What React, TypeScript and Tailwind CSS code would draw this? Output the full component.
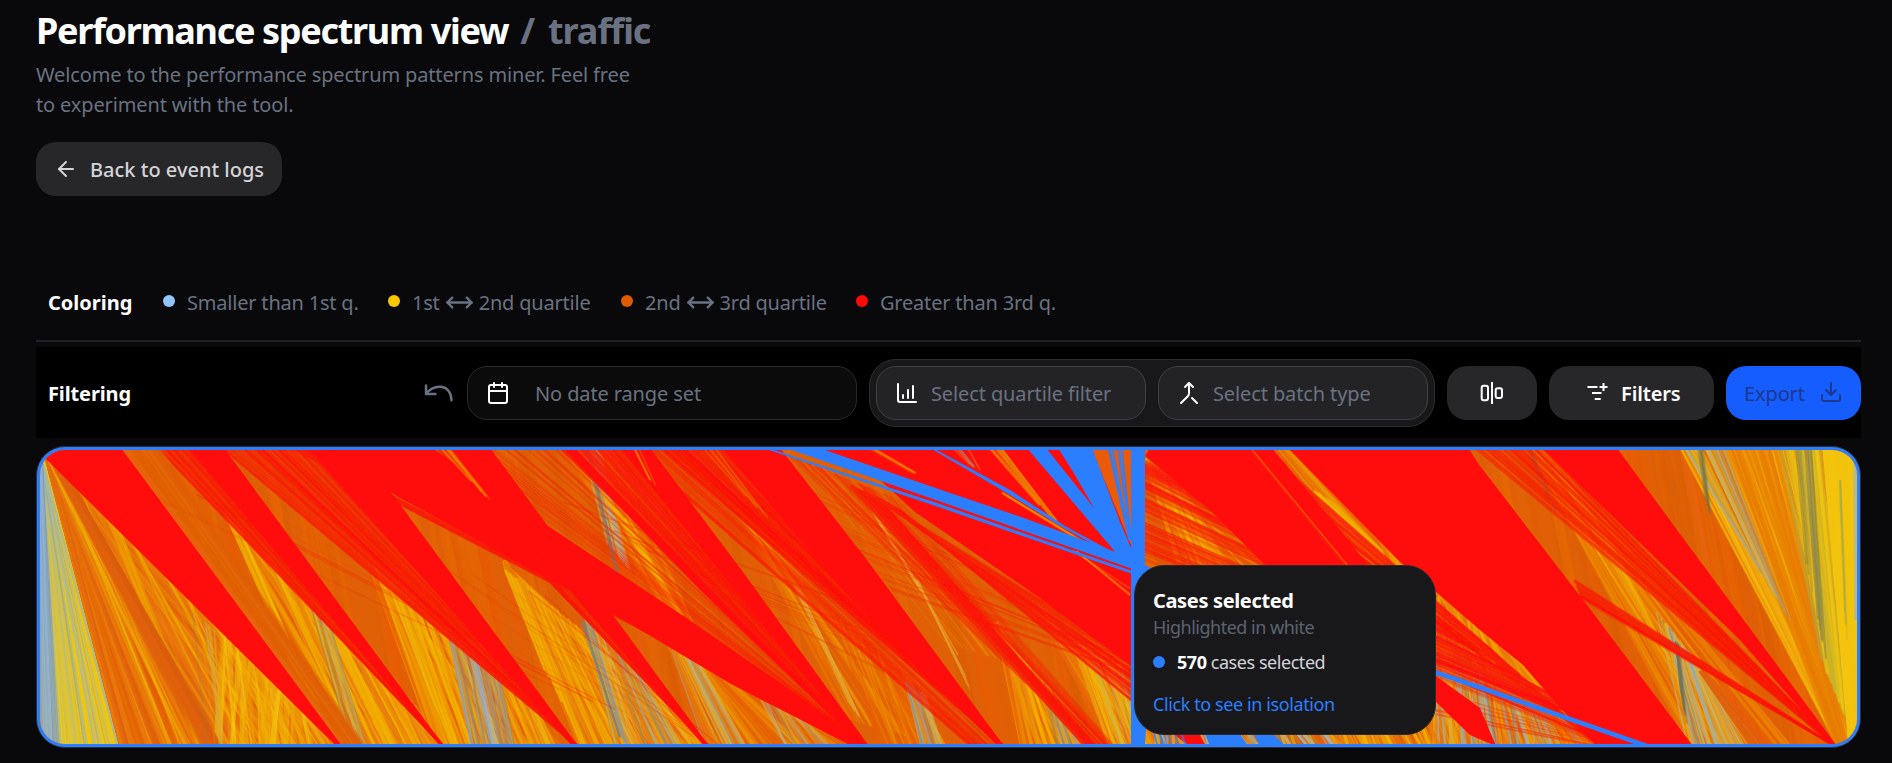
import React from "react";
import { ArrowLeft, Calendar, ChartColumnIncreasing, Download, Merge, MoveHorizontal } from "lucide-react";

type Pt = [number, number];
type Band = { a: Pt; b: Pt; c: Pt; d: Pt; n: number; colors: string[]; w: number; o: number; j?: number };

function rng(seed: number) {
  let s = seed;
  return () => {
    s = (s + 0x6d2b79f5) | 0;
    let t = Math.imul(s ^ (s >>> 15), 1 | s);
    t = (t + Math.imul(t ^ (t >>> 7), 61 | t)) ^ t;
    return ((t ^ (t >>> 14)) >>> 0) / 4294967296;
  };
}

const YELLOW = ["#f0b808", "#f0a808", "#f5b800", "#e87c0a", "#e8860a"];
const HOT = ["#ee9404", "#f0a400", "#e87808", "#e86008", "#e5600a"];
const PALE = ["#a9b8b0", "#c8b060", "#8fb0c8", "#8a8460", "#eeb010", "#e0a030", "#e07c18"];
const ORANGE = ["#e06008", "#d85c08", "#e86a08", "#ea5a08"];
const RED = ["#ff0c0c", "#fa1c0a", "#f03008"];
const BLUE = ["#2b7fff"];

function Streaks({ seed, ...p }: Band & { seed: number }) {
  const r = rng(seed * 7919 + 13);
  return (
    <g>
      {Array.from({ length: p.n }, (_, i) => {
        const t = r();
        const u = Math.min(1, Math.max(0, t + (r() - 0.5) * (p.j ?? 0.12)));
        const color = p.colors[Math.floor(r() * p.colors.length)];
        const w = p.w * (0.4 + r());
        const o = p.o * (0.5 + r() * 0.5);
        return (
          <line
            key={i}
            x1={p.a[0] + (p.b[0] - p.a[0]) * t}
            y1={p.a[1] + (p.b[1] - p.a[1]) * t}
            x2={p.c[0] + (p.d[0] - p.c[0]) * u}
            y2={p.c[1] + (p.d[1] - p.c[1]) * u}
            stroke={color}
            strokeWidth={w}
            strokeOpacity={o}
          />
        );
      })}
    </g>
  );
}

const T = 448;
const B = 746;
const band = (a: Pt, b: Pt, c: Pt, d: Pt, n: number, colors: string[], w: number, o: number, j?: number): Band => ({ a, b, c, d, n, colors, w, o, j });

const ground: Band[] = [
  band([30, T], [1870, T], [90, B], [1930, B], 420, ORANGE, 7, 0.5, 0.01),
  // opening fan
  band([38, 450], [47, 457], [34, B], [122, B], 150, ["#f0c80c", "#e8c81c", "#d8c440", "#f4c30a"], 3.4, 0.9, 0.3),
  band([38, 450], [45, 470], [36, B], [118, B], 46, ["#9cb8c0", "#a0b8a8", "#c0c078", "#8898a0"], 1.6, 0.6, 0.5),
  band([38, 450], [43, 470], [36, B], [62, B], 40, ["#8fb4dc", "#94b4d0", "#7890b0"], 2.2, 0.6, 0.5),
  band([47, 457], [48, 458], [122, B], [338, B], 190, ["#e87808", "#e06008", "#ea8c08", "#e86c08"], 4, 0.9, 1),
  band([48, 458], [300, 710], [170, B], [334, B], 70, YELLOW, 2.6, 0.55, 0.3),
  band([220, 630], [310, 720], [215, B], [325, B], 60, ["#f4c30a", "#f0b808", "#ee9a08"], 3.4, 0.6, 0.3),
  band([47, 457], [70, 480], [200, B], [222, B], 20, ORANGE, 4, 0.8, 0.3),
  band([190, 610], [215, 630], [205, B], [226, B], 9, PALE, 2.6, 0.45, 0.4),
  // successive open wedges
  band([226, 512], [232, 522], [332, B], [440, B], 90, HOT, 3.6, 0.8, 1),
  band([228, 520], [240, 528], [290, 660], [315, 700], 20, YELLOW, 2.4, 0.7, 0.5),
  band([260, 545], [420, 710], [352, B], [442, B], 80, YELLOW, 3, 0.7, 0.2),
  band([306, 590], [330, 620], [350, B], [366, B], 16, PALE, 2.5, 0.6, 0.3),
  band([368, 560], [376, 570], [436, B], [560, B], 100, HOT, 3.6, 0.8, 1),
  band([374, 565], [530, 694], [438, B], [555, B], 90, YELLOW, 3, 0.7, 0.15),
  band([445, 620], [500, 672], [472, B], [515, B], 44, ["#908070", "#8a94a0", "#c8a050", "#b07840", "#a0b4c8"], 2.6, 0.6, 0.2),
  band([504, 560], [506, 570], [580, B], [705, B], 110, HOT, 3.4, 0.8, 1),
  band([505, 570], [520, 580], [545, 670], [585, B], 16, YELLOW, 2.2, 0.7, 0.4),
  band([512, 575], [660, 690], [582, B], [703, B], 70, YELLOW, 2.4, 0.6, 0.15),
  band([582, 610], [640, 670], [616, B], [692, B], 42, PALE, 2.8, 0.6, 0.25),
  band([580, 620], [592, 625], [618, 735], [628, B], 9, ["#707870", "#8090a0"], 2, 0.6, 0.3),
  band([562, T], [612, T], [660, 600], [700, 640], 60, HOT, 3, 0.5, 0.4),
  band([580, T], [600, T], [605, 540], [630, 570], 30, PALE, 2.4, 0.6, 0.3),
  band([585, T], [589, T], [612, 560], [620, 580], 6, ["#78806c"], 2, 0.6, 0.3),
  band([600, 490], [625, 520], [665, 590], [690, 630], 40, YELLOW, 2.8, 0.6, 0.3),
  band([668, 646], [740, 680], [710, B], [850, B], 80, HOT, 3.4, 0.65, 0.15),
  band([668, 648], [700, 665], [705, B], [745, B], 24, PALE, 2.4, 0.6, 0.3),
  band([760, 700], [800, 715], [780, B], [830, B], 26, PALE, 2.4, 0.5, 0.3),
  band([722, 480], [728, 490], [850, 720], [940, B], 44, HOT, 2.2, 0.5, 1),
  band([793, 585], [800, 590], [846, 700], [862, 720], 12, ["#e8a020", "#d8b050", "#ee9404"], 1.8, 0.6, 0.5),
  band([830, 610], [910, 680], [880, B], [945, B], 44, HOT, 2.4, 0.55, 0.3),
  band([905, 680], [925, 695], [920, B], [943, B], 24, PALE, 2.4, 0.7, 0.3),
  band([785, 455], [880, 500], [940, 640], [1000, 660], 26, HOT, 1.6, 0.35, 0.4),
  band([863, 495], [866, 500], [918, 586], [924, 594], 9, ["#e8a020", "#f0b010", "#d8b050"], 2, 0.7, 0.6),
  band([912, 575], [918, 580], [958, 655], [970, 690], 6, ["#e8a020", "#d8a050"], 1.5, 0.6, 0.5),
  band([996, 622], [1000, 632], [1022, B], [1088, B], 80, HOT, 3, 0.85, 1),
  band([1003, 640], [1050, 690], [1025, B], [1085, B], 30, YELLOW, 2.6, 0.7, 0.2),
  band([1044, 690], [1060, 705], [1058, B], [1080, B], 20, PALE, 2.4, 0.7, 0.3),
  band([1033, 600], [1040, 606], [1110, B], [1145, B], 50, HOT, 2.4, 0.7, 0.8),
  band([1070, 640], [1120, 665], [1105, B], [1160, B], 50, YELLOW, 2.8, 0.75, 0.2),
  band([1090, 650], [1125, 672], [1116, B], [1145, B], 14, PALE, 2, 0.6, 0.3),
  band([1145, 458], [1150, 468], [1190, 600], [1290, 580], 70, HOT, 3, 0.6, 1),
  band([1160, 480], [1185, 490], [1200, 565], [1235, 575], 26, YELLOW, 2.2, 0.6, 0.4),
  band([1278, T], [1292, T], [1370, 560], [1420, 580], 60, HOT, 2.6, 0.6, 0.4),
  band([1312, 490], [1330, 500], [1390, 560], [1412, 580], 20, YELLOW, 2.2, 0.55, 0.3),
  band([1380, 540], [1450, 590], [1440, B], [1590, B], 130, HOT, 3, 0.75, 0.4),
  band([1430, 590], [1520, 660], [1430, B], [1590, B], 60, YELLOW, 2.6, 0.6, 0.3),
  band([1430, 650], [1570, 712], [1430, B], [1594, B], 80, PALE, 2.6, 0.65, 0.12),
  band([1150, 720], [1330, 720], [1155, B], [1350, B], 110, PALE, 2.6, 0.8, 0.1),
  band([1330, 725], [1430, 725], [1340, B], [1440, B], 50, YELLOW, 3, 0.8, 0.1),
  band([1530, T], [1545, T], [1690, B], [1790, B], 110, HOT, 2.6, 0.6, 0.6),
  band([1528, T], [1532, T], [1540, 480], [1560, 520], 6, ["#807040"], 1.8, 0.5, 0.3),
  band([1555, 465], [1610, 540], [1640, 610], [1670, 660], 34, YELLOW, 2.4, 0.6, 0.4),
  band([1655, 610], [1710, 680], [1684, B], [1750, B], 60, PALE, 2.8, 0.65, 0.25),
  band([1674, 640], [1680, 645], [1680, 690], [1688, 730], 6, ["#686c58"], 2, 0.6, 0.3),
  band([1700, 670], [1712, 680], [1752, B], [1768, B], 26, ORANGE, 4, 0.9, 0.5),
  // closing fan on the right edge
  band([1680, T], [1880, T], [1838, B], [1880, B], 210, ["#f0a808", "#f4b80a", "#ee9a08", "#e88408"], 3.6, 0.9, 0.06),
  band([1720, T], [1780, T], [1836, B], [1848, B], 50, ["#e87808", "#e88408"], 2.4, 0.6, 0.2),
  band([1684, T], [1724, T], [1760, 570], [1790, 620], 34, PALE, 2, 0.5, 0.3),
  band([1698, T], [1704, T], [1706, 500], [1712, 520], 6, ["#6c7050"], 1.8, 0.5, 0.3),
  band([1780, T], [1840, T], [1822, 660], [1858, B], 60, ["#c8b830", "#b0a840", "#f4c30a", "#e8c010"], 3, 0.55, 0.1),
  band([1824, T], [1870, T], [1850, B], [1870, B], 90, ["#f4c30a", "#f0c40a"], 4, 0.9, 0.1),
  band([1796, T], [1812, T], [1806, 560], [1826, 660], 9, ["#687050", "#8a8460"], 2.2, 0.5, 0.2),
  band([1839, 480], [1842, 480], [1844, 600], [1850, 680], 4, ["#a0a850"], 1.6, 0.4, 0.2),
  band([1854, T], [1859, T], [1855, 620], [1859, 620], 6, ["#b0b8a0"], 1.6, 0.6, 0.2),
];

const haze: Band[] = [
  band([157, T], [192, T], [443, B], [443, B], 70, RED, 2, 0.5),
  band([122, T], [157, T], [341, B], [362, B], 16, ORANGE, 8, 0.7),
  band([222, T], [310, T], [577, B], [577, B], 120, RED, 2, 0.5),
  band([290, T], [360, T], [867, B], [867, B], 60, RED, 2, 0.5),
  band([420, T], [450, T], [708, B], [708, B], 40, RED, 2, 0.5),
  band([560, T], [625, T], [867, B], [867, B], 120, RED, 2.2, 0.5),
  band([440, T], [560, T], [867, B], [867, B], 36, RED, 1.8, 0.35),
  band([660, T], [735, T], [1003, B], [1003, B], 140, RED, 2.2, 0.5),
  band([630, T], [700, T], [970, B], [1003, B], 50, RED, 1.8, 0.35),
  band([788, 455], [900, 500], [1090, B], [1115, B], 50, RED, 1.8, 0.3),
  band([850, 485], [880, 500], [1085, B], [1095, B], 60, RED, 2.4, 0.5),
  band([862, 490], [900, 510], [1131, 655], [1131, 700], 60, RED, 2.4, 0.5),
  band([810, 490], [900, 600], [1135, 640], [1140, 680], 16, RED, 1.5, 0.4, 0.1),
  band([60, 455], [560, 600], [560, 690], [720, B], 14, RED, 1.2, 0.35, 0.2),
  band([560, 500], [700, 580], [840, 600], [900, 680], 10, RED, 1.2, 0.35, 0.2),
  band([1145, 460], [1145, 560], [1440, 620], [1600, 744], 70, RED, 2.6, 0.55, 0.1),
  band([1290, 470], [1350, 560], [1480, 640], [1600, B], 50, RED, 2, 0.45, 0.3),
  band([1436, 635], [1436, 665], [1630, 735], [1660, B], 26, RED, 2.4, 0.6, 0.1),
  band([1436, 690], [1436, 715], [1590, 738], [1590, B], 8, RED, 1.4, 0.5, 0.1),
  band([1475, T], [1545, T], [1835, B], [1835, B], 100, RED, 1.8, 0.38),
  band([1574, 580], [1582, 600], [1835, B], [1835, B], 34, RED, 1.8, 0.55),
];

const redAreas = [
  "45,458 44,448 121,448 342,746 336,746",
  "189,448 224,448 444,746 440,746",
  "308,448 360,448 393,495 578,746 572,746",
  "330,448 432,448 560,534 688,619 789,689 868,746 848,744 731,684 617,616 398,497",
  "447,448 490,448 544,521 709,746 704,746 585,608",
  "563,448 575,448 740,620 868,746 858,742 700,590",
  "620,448 650,448 740,568 869,746 855,738",
  "722,448 780,448 867,560 1004,746 996,744 856,605",
  "818,448 1120,448 1131,470 1131,666 1040,598 960,543 915,512 880,480",
  "1150,448 1272,448 1340,530 1372,570 1270,570 1210,510 1145,456",
  "1288,448 1468,448 1480,466 1587,605 1693,746 1596,746 1557,704 1523,665 1480,630 1436,592 1400,562",
  "1436,676 1480,708 1496,746 1470,735 1436,702",
  "1542,448 1617,448 1680,534 1837,746 1831,744 1740,640",
  "1170,732 1200,735 1206,746 1190,746",
];

const blueAreas = [
  "1131,448 1145,448 1145,565 1155,570 1145,746 1131,746",
  "786,448 819,448 940,489.500 1024,518 1113,551 1131,557 1131,568.500 940,501.500",
  "763,448 776,450.500 940,504 1131,570.500 1131,573.500 940,507.500",
  "930,448 933,448 1010,490 1065,526 1113,552 1113,555 1060,526 1000,489",
  "1027,448 1046,448 1094,508 1072,470 1058,448 1092,448 1120,522 1131,548 1131,566 1117,554",
  "1436,670 1480,685 1648,744 1640,746 1480,690 1436,675",
  "1205,734 1240,734 1248,746 1210,746",
  "1254,734 1272,734 1286,746 1260,746",
];

function Spectrum() {
  return (
    <svg className="block h-full w-full" viewBox="40 450 1817 294" preserveAspectRatio="none" aria-hidden="true">
      <defs>
        <filter id="soften" x="0" y="0" width="1" height="1">
          <feGaussianBlur stdDeviation="0.7" />
        </filter>
      </defs>
      <rect x="40" y="450" width="1817" height="294" fill="#e06008" />
      <g filter="url(#soften)">
        {ground.map((b, i) => (
          <Streaks key={i} seed={i + 1} {...b} />
        ))}
        {haze.map((b, i) => (
          <Streaks key={i} seed={i + 100} {...b} />
        ))}
      </g>
      {redAreas.map((p) => (
        <polygon key={p} points={p} fill="#ff0c0c" />
      ))}
      <g filter="url(#soften)">
        <Streaks seed={302} {...band([860, 448], [880, 448], [900, 470], [925, 475], 5, HOT, 2.4, 0.5)} />
        <Streaks seed={303} {...band([990, 448], [1002, 448], [1040, 505], [1060, 525], 10, HOT, 2.4, 0.7)} />
        <Streaks seed={307} {...band([952, 448], [968, 448], [970, 465], [980, 470], 6, PALE, 2, 0.5)} />
        <Streaks seed={308} {...band([998, 490], [1010, 498], [1070, 535], [1090, 545], 6, HOT, 1.8, 0.5)} />
        <Streaks seed={304} {...band([1248, 448], [1251, 448], [1345, 568], [1350, 568], 3, HOT, 1.6, 0.55)} />
        <Streaks seed={309} {...band([634, 448], [642, 448], [650, 480], [660, 490], 5, HOT, 1.6, 0.5)} />
        <Streaks seed={310} {...band([700, 448], [722, 448], [740, 490], [780, 530], 10, HOT, 1.8, 0.55)} />
        <Streaks seed={311} {...band([1070, 550], [1080, 552], [1130, 585], [1130, 600], 4, HOT, 1.6, 0.5)} />
        <Streaks seed={312} {...band([440, 448], [450, 448], [470, 480], [490, 500], 6, HOT, 2, 0.5)} />
      </g>
      <polygon points="1092,450 1131,450 1131,545" fill="#ea5a08" />
      <Streaks seed={305} {...band([1104, 448], [1130, 448], [1129, 540], [1132, 540], 9, BLUE, 1.8, 0.9)} />
      {blueAreas.map((p) => (
        <polygon key={p} points={p} fill="#2b7fff" />
      ))}
      <Streaks seed={306} {...band([1150, 725], [1180, 725], [1156, 746], [1186, 746], 9, BLUE, 1.6, 0.8)} />
    </svg>
  );
}

function Dot({ className }: { className: string }) {
  return <span className={`mb-[3px] size-3 shrink-0 rounded-full ${className}`} />;
}

export default function App() {
  return (
    <div className="flex h-[763px] w-full flex-col bg-[#09090b] pl-9 pr-[31px] font-['Noto_Sans','Open_Sans',sans-serif] text-xl text-[#6a7282]">
      <header className="flex h-[280px] flex-col items-start">
        <h1 className="mt-[9px] flex h-11 text-[36px] font-bold leading-11 tracking-[-1.32px] whitespace-nowrap text-white">
          Performance spectrum view
          <span className="ml-3 text-[#6a7282]">/</span>
          <span className="ml-[14px] tracking-[-1.05px] text-[#6a7282]">traffic</span>
        </h1>
        <p className="mt-[7px] leading-[30px] tracking-[-0.14px] whitespace-nowrap">
          Welcome to the performance spectrum patterns miner. Feel free
          <br />
          to experiment with the tool.
        </p>
        <button className="mt-[22px] flex h-[54px] w-[246px] items-center rounded-[20px] bg-[#27272a] pl-[18px] font-medium whitespace-nowrap text-[#d4d4d8]">
          <ArrowLeft size={24} strokeWidth={2} className="mr-3 shrink-0" />
          <span className="pt-[2px]">Back to event logs</span>
        </button>
      </header>

      <section className="flex h-[62px] shrink-0 items-center border-b-2 border-[#222224] pb-[15px] pl-3 tracking-[-0.2px] whitespace-nowrap">
        <span className="w-[115px] font-bold tracking-normal text-white">Coloring</span>
        <span className="flex w-[225px] items-center gap-3"><Dot className="bg-[#93c5fd]" />Smaller than 1st q.</span>
        <span className="flex w-[233px] items-center gap-3">
          <Dot className="bg-[#f9c800]" />
          <span className="flex items-center gap-[5px]">1st <MoveHorizontal size={29} strokeWidth={2} className="-mt-px" /> 2nd quartile</span>
        </span>
        <span className="flex w-[235px] items-center gap-3">
          <Dot className="bg-[#e05a00]" />
          <span className="flex items-center gap-[5px]">2nd <MoveHorizontal size={29} strokeWidth={2} className="-mt-px" /> 3rd quartile</span>
        </span>
        <span className="flex items-center gap-3"><Dot className="bg-[#ff0808]" />Greater than 3rd q.</span>
      </section>

      <section className="mt-[5px] flex h-[91px] shrink-0 items-center bg-black pl-3 tracking-[-0.12px] whitespace-nowrap">
        <span className="pt-[2px] font-bold text-white">Filtering</span>
        <svg className="ml-auto mr-[14px] h-[20px] w-[30px] shrink-0" viewBox="423 383 30 20" fill="none" stroke="currentColor" strokeWidth="2.4" strokeLinecap="round" strokeLinejoin="round">
          <path d="M426 385.500V394h9.500M426 394c4-5.500 9.500-7.600 15-7.200 6 .6 10.300 5.500 10.500 13.400" />
        </svg>
        <div className="mr-3 flex h-[54px] w-[390px] shrink-0 items-center rounded-[20px] border border-[#2a2a2d] bg-[#0b0b0b] pl-[18px]">
          <Calendar size={24} className="mr-[25px] text-white" />
          <span className="pt-[2px]">No date range set</span>
        </div>
        <div className="mr-3 flex h-[68px] w-[566px] shrink-0 items-center gap-3 rounded-[27px] border border-[#2e2e31] bg-[#18181b] pl-[6px]">
          <div className="flex h-[54px] w-[270px] items-center rounded-[20px] border border-[#3f3f46] bg-[#232326] pl-[18px]">
            <ChartColumnIncreasing size={24} className="mr-[12px] text-white" />
            <span className="pt-[2px]">Select quartile filter</span>
          </div>
          <div className="flex h-[54px] w-[270px] items-center rounded-[20px] border border-[#3f3f46] bg-[#232326] pl-[18px]">
            <Merge size={24} className="mr-[12px] text-white" />
            <span className="pt-[2px]">Select batch type</span>
          </div>
        </div>
        <button className="mr-3 flex h-[54px] w-[90px] shrink-0 items-center justify-center rounded-[20px] bg-[#27272a] text-white">
          <svg width="24" height="24" viewBox="0 0 24 24" fill="none" stroke="currentColor" strokeWidth="2">
            <rect x="1.700" y="4.800" width="6.300" height="14.400" rx="2" />
            <path d="M12 1v22" />
            <rect x="15.700" y="7.200" width="6.300" height="9.800" rx="2" />
          </svg>
        </button>
        <button className="mr-3 flex h-[54px] w-[165px] shrink-0 items-center rounded-[20px] bg-[#27272a] pl-[38px] font-semibold text-white">
          <svg className="mr-[13px] -mt-[2px]" width="21" height="20" viewBox="0 0 21 20" fill="none" stroke="currentColor" strokeWidth="2">
            <path d="M.5 5h10M5 11h9.500M7.700 17h6M16.500 1v8M12.500 5h8" />
          </svg>
          <span className="pt-[2px]">Filters</span>
        </button>
        <button className="flex h-[54px] w-[135px] shrink-0 items-center justify-between rounded-[20px] bg-[#155dfc] pl-[18px] pr-[18px] text-[#1c398e]">
          <span className="pt-[2px]">Export</span>
          <Download size={24} className="-mt-[2px]" />
        </button>
      </section>

      <main className="relative mt-2 h-[302px] shrink-0 overflow-hidden rounded-[29px] border border-[#303034] bg-[#2b7fff] p-[3px]">
        <div className="h-full overflow-hidden rounded-[25px]">
          <Spectrum />
        </div>
        <aside className="absolute left-[1097px] top-[118px] flex h-[170px] w-[302px] flex-col rounded-[30px] border border-[#2a2a2d] bg-[#18181b] pl-[18px] pt-[21px] whitespace-nowrap">
          <strong className="h-[27px] text-xl leading-[27px] tracking-[-0.35px] text-white">Cases selected</strong>
          <span className="h-[26px] text-lg leading-[26px] tracking-[-0.5px] text-[#5c6370]">Highlighted in white</span>
          <span className="mt-[9px] flex h-[26px] items-center text-lg leading-[26px] tracking-[-0.45px] text-[#d4d4d8]">
            <span className="mr-3 size-3 rounded-full bg-[#2b7fff]" />
            <span><b className="text-white">570</b> cases selected</span>
          </span>
          <a className="mt-4 text-lg leading-[26px] tracking-[-0.4px] text-[#2b7fff]">Click to see in isolation</a>
        </aside>
      </main>
    </div>
  );
}
